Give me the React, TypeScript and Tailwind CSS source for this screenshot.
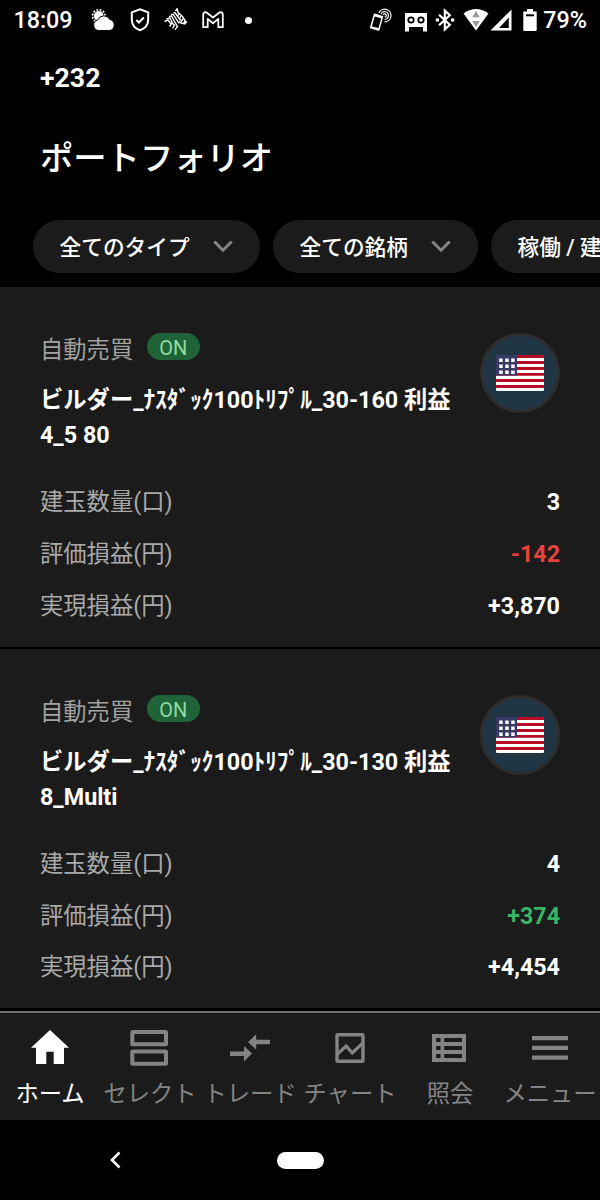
import React from 'react';

interface Position {
  name: string[];
  quantity: string;
  valuation: string;
  valuationClass: string;
  realized: string;
}

const positions: Position[] = [
  {
    name: ['ビルダー_ﾅｽﾀﾞｯｸ100ﾄﾘﾌﾟﾙ_30-160 利益', '4_5 80'],
    quantity: '3',
    valuation: '-142',
    valuationClass: 'text-[#e8413a]',
    realized: '+3,870',
  },
  {
    name: ['ビルダー_ﾅｽﾀﾞｯｸ100ﾄﾘﾌﾟﾙ_30-130 利益', '8_Multi'],
    quantity: '4',
    valuation: '+374',
    valuationClass: 'text-[#38b566]',
    realized: '+4,454',
  },
];

const WeatherIcon = () => (
  <svg className="w-6 h-6" viewBox="0 0 24 24" fill="#fff">
    <circle cx="7.8" cy="8" r="6.3" fill="none" stroke="#fff" strokeWidth="1.7" strokeDasharray="1.9 1.4" />
    <circle cx="7.8" cy="8" r="4.9" />
    <path d="M7.5 22.5a5.4 5.4 0 0 1-.7-10.6A6.6 6.6 0 0 1 18.8 11.5a5.6 5.6 0 0 1-.4 11z" stroke="#000" strokeWidth="1" />
  </svg>
);

const ShieldIcon = () => (
  <svg className="w-6 h-6" viewBox="0 0 24 24" fill="none" stroke="#fff" strokeWidth="2">
    <path d="M12 1.3 20.2 4.4v7.2c0 5-3.4 9.1-8.2 10.7-4.8-1.6-8.2-5.7-8.2-10.7V4.4z" />
    <path d="m8.4 12 2.5 2.5 4.9-5" />
  </svg>
);

const ZebraIcon = () => (
  <svg className="w-6 h-6" viewBox="0 0 24 24" fill="none" stroke="#fff" strokeWidth="1.4">
    <path d="M.5 13.5 4 12l3 4M2.5 11l3.2-1.2 4.6 8.2M5 8.8l2.4-.9L14 19.5M7 6.7l2.2-.5 5.8 9.3M9.6 4.8l1.6.2 5.6 7.7M5.5 18.5 8 15M8.5 20.5l2.5-4M11 22l2.5-4" />
    <path d="M11.5 3.2 13 .8l1.2 3.7 4.3 4 3.2 5-1.5 2.3-3.2-.6-2.2-2M14.5 6.2l-1.2 3M16.7 8l-1.5 4M19 10.5l-2 3.8" />
    <path d="m19.8 15.8 2.6-2.5" strokeWidth="2.8" />
  </svg>
);

const MailIcon = () => (
  <svg className="w-6 h-6" viewBox="0 0 24 24" fill="none" stroke="#fff" strokeWidth="1.8" strokeLinejoin="round">
    <path d="M2.2 19.2V6.4c0-2 2.2-2.8 3.7-1.6l6.1 4.7 6.1-4.7c1.5-1.2 3.7-.4 3.7 1.6v12.8h-4.5v-8.3L12 15.2l-5.3-4.3v8.3z" />
  </svg>
);

const NfcIcon = () => (
  <svg className="w-6 h-6" viewBox="0 0 24 24" fill="none" stroke="#fff" strokeWidth="1.5">
    <path d="M5.5 6.3 13.5 8.6 9.7 22 1.7 19.8z" strokeWidth="1.5" strokeLinejoin="round" />
    <path d="m5.2 7.3 8 2.3M2 19l8 2.2" strokeWidth="1.8" />
    <path d="M10 4.8a6.3 6.3 0 1 1 5.6 9M12 5.8a3.9 3.9 0 1 1 3.6 5.6M14 7a1.7 1.7 0 1 1 1.6 2.2" strokeWidth="1.2" />
  </svg>
);

const TapeIcon = () => (
  <svg className="w-6 h-6" viewBox="0 0 24 24">
    <path d="M1 5h22v18.5h-4V19H5v4.5H1z" fill="#fff" />
    <circle cx="7" cy="12" r="2.7" fill="#fff" stroke="#000" strokeWidth="1.8" />
    <circle cx="17" cy="12" r="2.7" fill="#fff" stroke="#000" strokeWidth="1.8" />
  </svg>
);

const BluetoothIcon = () => (
  <svg className="w-6 h-6" viewBox="0 0 24 24" fill="none" stroke="#fff" strokeWidth="2.2">
    <path d="m6 6.8 10.8 10-5 4.6V2.6l5 4.6L6 17.2" />
    <path d="M2.8 12h3.2M18 12h3.2" strokeWidth="3.2" />
  </svg>
);

const WifiIcon = () => (
  <svg className="w-[26px] h-6" viewBox="0 0 26 24">
    <path d="M.5 5.5C8-.6 18-.6 25.5 5.5L13 22.5z" fill="#fff" />
    <path d="m13 3 3.8 6.2H9.2zM9.2 13h7.6L13 19.2z" fill="#999" />
  </svg>
);

const SignalIcon = () => (
  <svg className="w-[22px] h-6" viewBox="0 0 22 24">
    <path d="M21.5 1.5v21H.5zM18.8 9.5 9 20h9.8z" fill="#fff" fillRule="evenodd" />
  </svg>
);

const BatteryIcon = () => (
  <svg className="w-4 h-6" viewBox="0 0 16 24">
    <path d="M5 1h6v2.5h3.7V22q0 1-1 1H2.3q-1 0-1-1V3.5H5z" fill="#fff" />
    <path d="M4 6.3h8v2H4z" fill="#000" />
  </svg>
);

const HomeIcon = () => (
  <svg className="w-10 h-10" viewBox="0 0 40 40" fill="#fff">
    <path d="M20 2 39 19.7H34V36H23.7V23.8h-7.4V36H6V19.7H1z" />
  </svg>
);

const SelectIcon = () => (
  <svg className="w-10 h-10" viewBox="0 0 40 40" fill="none" stroke="#848484" strokeWidth="4">
    <rect x="2.3" y="4" width="33.7" height="12.3" rx=".5" />
    <rect x="2.3" y="23.4" width="33.7" height="12.3" rx=".5" />
  </svg>
);

const TradeIcon = () => (
  <svg className="w-10 h-10" viewBox="0 0 40 40" fill="#848484">
    <path d="M40 11.8v4.4H26.2v5.5L18 14l8.2-7.7v5.5zM0 23.5h14V18l8 7.6-8 7.9v-5.6H0z" />
  </svg>
);

const ChartIcon = () => (
  <svg className="w-10 h-10" viewBox="0 0 40 40" fill="none" stroke="#848484" strokeWidth="3.4">
    <rect x="7" y="6.7" width="26" height="26.6" rx="1" />
    <path d="m7 26.5 9.2-8.5 6 7L33 14.8" strokeWidth="3.2" />
  </svg>
);

const InquiryIcon = () => (
  <svg className="w-10 h-10" viewBox="0 0 40 40">
    <path d="M2 6h34v28H2z" fill="#848484" />
    <path d="M6.2 10h4.3v4H6.2zm8 0H32v4H14.2zm-8 8h4.3v4H6.2zm8 0H32v4H14.2zm-8 8h4.3v4H6.2zm8 0H32v4H14.2z" fill="#1b1b1b" />
  </svg>
);

const MenuIcon = () => (
  <svg className="w-10 h-10" viewBox="0 0 40 40" fill="#848484">
    <path d="M2 8h36v4.2H2zm0 9.7h36v4.2H2zm0 9.7h36v4.3H2z" />
  </svg>
);

const ChevronDownIcon = () => (
  <svg className="w-5 h-3.5" viewBox="0 0 20 14" fill="none" stroke="#858585" strokeWidth="3">
    <path d="m1.3 1.5 8.7 8.7 8.7-8.7" />
  </svg>
);

const UsFlag = () => (
  <div className="w-20 h-20 rounded-full bg-[#213645] border-3 border-[#2d2d2d] flex items-center justify-center">
    <svg className="w-12 h-9" viewBox="0 0 48 36">
      <rect width="48" height="36" rx="1.2" fill="#fff" />
      <path d="M1.2 0h45.6Q48 0 48 1.2V3H0V1.2Q0 0 1.2 0zM0 6h48v3H0zm0 6h48v3H0zm0 6h48v2.7H0zm0 6h48v3H0zm0 6h48v3H0z" fill="#b80d25" />
      <path d="M0 0h21v20.5H0z" fill="#393968" />
      <path d="M3.2 3.5h3.5V7H3.2zm6 0h3.5V7H9.2zm6 0h3.5V7h-3.5zm-12 6h3.5V13H3.2zm6 0h3.5V13H9.2zm6 0h3.5V13h-3.5zm-12 6h3.5V19H3.2zm6 0h3.5V19H9.2zm6 0h3.5V19h-3.5z" fill="#fff" />
    </svg>
  </div>
);

const StatusBar = () => (
  <div className="h-10 flex items-center pl-[13.5px] pr-[13px] shrink-0 text-[23.3px] leading-none font-medium">
    <span className="w-[77.5px] pt-0.5">18:09</span>
    <div className="flex items-center gap-[12.5px]">
      <WeatherIcon />
      <ShieldIcon />
      <ZebraIcon />
      <MailIcon />
      <span className="w-[7px] h-[7px] ml-2 rounded-full bg-white" />
    </div>
    <div className="ml-auto flex items-center">
      <NfcIcon />
      <span className="ml-[11px]"><TapeIcon /></span>
      <span className="ml-[5px]"><BluetoothIcon /></span>
      <span className="ml-[6px]"><WifiIcon /></span>
      <span className="ml-[1px]"><SignalIcon /></span>
      <span className="ml-[10px]"><BatteryIcon /></span>
      <span className="ml-[5px] pt-0.5">79%</span>
    </div>
  </div>
);

const FilterChip: React.FC<{ label: string; widthClass: string }> = ({ label, widthClass }) => (
  <button className={`${widthClass} h-[53px] shrink-0 rounded-full bg-[#1b1b1b] flex items-center justify-between pl-[26.5px] pr-[27px] text-[21.7px] font-medium whitespace-nowrap`}>
    <span className="pt-[3px]">{label}</span>
    <ChevronDownIcon />
  </button>
);

const Row: React.FC<{ label: string; value: string; valueClass?: string }> = ({ label, value, valueClass = 'text-white' }) => (
  <div className="flex items-center justify-between h-[51.7px]">
    <span className="text-[#a9a9a9]">{label}</span>
    <span className={`font-bold ${valueClass}`}>{value}</span>
  </div>
);

const PositionCard: React.FC<{ position: Position }> = ({ position }) => (
  <div className="h-[361.7px] shrink-0 bg-[#1b1b1b] border-b-2 border-black px-10 pt-[46px] text-[23.3px] leading-[35px]">
    <div className="flex justify-between h-[144px]">
      <div>
        <div className="flex items-start h-[50px]">
          <span className="text-[#a1a1a1] leading-[35px]">自動売買</span>
          <span className="ml-[13.5px] w-[53px] h-[27px] rounded-full bg-[#216338] text-[#8bdca1] text-[20px] leading-[30px] text-center">ON</span>
        </div>
        {position.name.map((line) => (
          <p key={line} className="font-bold whitespace-nowrap">{line}</p>
        ))}
      </div>
      <UsFlag />
    </div>
    <Row label="建玉数量(口)" value={position.quantity} />
    <Row label="評価損益(円)" value={position.valuation} valueClass={position.valuationClass} />
    <Row label="実現損益(円)" value={position.realized} />
  </div>
);

const tabs = [
  { label: 'ホーム', Icon: HomeIcon, active: true },
  { label: 'セレクト', Icon: SelectIcon },
  { label: 'トレード', Icon: TradeIcon },
  { label: 'チャート', Icon: ChartIcon },
  { label: '照会', Icon: InquiryIcon },
  { label: 'メニュー', Icon: MenuIcon },
];

const TabBar = () => (
  <nav className="h-[109px] shrink-0 bg-[#1b1b1b] border-t-2 border-[#707070] grid grid-cols-6">
    {tabs.map(({ label, Icon, active }) => (
      <div key={label} className={`flex flex-col items-center pt-[15px] ${active ? 'text-white' : 'text-[#848484]'}`}>
        <Icon />
        <span className="mt-[9px] text-[23.3px] leading-[35px] whitespace-nowrap">{label}</span>
      </div>
    ))}
  </nav>
);

const App: React.FC = () => {
  return (
    <div className="w-[600px] h-[1200px] overflow-hidden bg-black text-white flex flex-col font-[Roboto,'Noto_Sans_CJK_JP',sans-serif]">
      <StatusBar />
      <header className="h-[247px] shrink-0">
        <div className="px-10 pt-5 text-[26.7px] leading-9 font-bold">+232</div>
        <h1 className="px-10 pt-[39px] text-[33.3px] leading-[48px] font-medium">ポートフォリオ</h1>
        <div className="flex gap-[13px] pl-[33px] pt-[37px]">
          <FilterChip label="全てのタイプ" widthClass="w-[227px]" />
          <FilterChip label="全ての銘柄" widthClass="w-[205px]" />
          <FilterChip label="稼働 / 建玉あり" widthClass="w-[230px]" />
        </div>
      </header>
      <main className="h-[724px] shrink-0 overflow-hidden">
        {positions.map((position) => (
          <PositionCard key={position.name[0]} position={position} />
        ))}
      </main>
      <TabBar />
      <div className="h-20 shrink-0 grid grid-cols-[230px_140px] items-center">
        <svg className="w-3 h-5 justify-self-center" viewBox="0 0 12 20" fill="none" stroke="#fff" strokeWidth="2.6">
          <path d="M10.5 2.5 3 10l7.5 7.5" />
        </svg>
        <span className="w-[47px] h-[17px] rounded-full bg-white justify-self-center" />
      </div>
    </div>
  );
};

export default App;
